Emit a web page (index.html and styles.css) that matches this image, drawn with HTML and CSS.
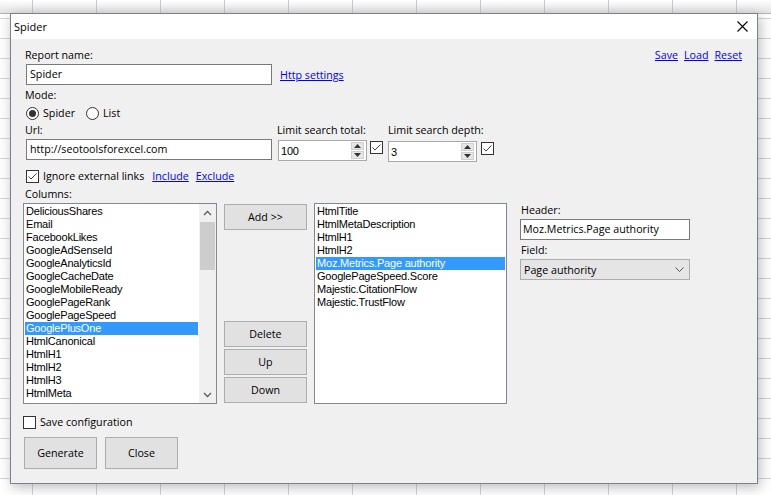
FILE: index.html
```html
<!DOCTYPE html>
<html>
<head>
<meta charset="utf-8">
<title>Spider</title>
<link rel="stylesheet" href="styles.css">
</head>
<body>
<div class="sheet">
  <div class="colhead"></div>
  <div class="cells"></div>
</div>

<div class="dialog">
  <div class="titlebar">
    <span class="title">Spider</span>
    <svg class="close" width="11" height="11" viewBox="0 0 11 11"><path d="M0.5 0.5 L10.5 10.5 M10.5 0.5 L0.5 10.5" stroke="#000" stroke-width="1.1" fill="none"/></svg>
  </div>
  <div class="body">
    <div class="row r-top">
      <span class="label">Report name:</span>
      <span class="toplinks"><a class="link">Save</a><a class="link">Load</a><a class="link">Reset</a></span>
    </div>
    <div class="row r-name">
      <div class="tb name">Spider</div>
      <a class="link http">Http settings</a>
    </div>
    <div class="label r-mode">Mode:</div>
    <div class="row r-radios">
      <span class="radio on"></span><span class="rlabel">Spider</span>
      <span class="radio r2"></span><span class="rlabel">List</span>
    </div>
    <div class="row r-url">
      <div class="field f-url">
        <div class="label">Url:</div>
        <div class="tb url">http://seotoolsforexcel.com</div>
      </div>
      <div class="field f-lim1">
        <div class="label">Limit search total:</div>
        <div class="spinrow s1">
          <div class="spin"><span class="spinval">100</span>
            <span class="spinbtns"><span class="sb"><svg width="7" height="4" viewBox="0 0 7 4"><path d="M0 4 L3.5 0 L7 4 Z" fill="#333"/></svg></span><span class="sb"><svg width="7" height="4" viewBox="0 0 7 4"><path d="M0 0 L3.5 4 L7 0 Z" fill="#333"/></svg></span></span>
          </div>
          <span class="cb"><svg width="11" height="11" viewBox="0 0 11 11"><path d="M1.5 5.5 L4 8 L9.5 2.5" stroke="#444" stroke-width="1" fill="none"/></svg></span>
        </div>
      </div>
      <div class="field f-lim2">
        <div class="label">Limit search depth:</div>
        <div class="spinrow s2">
          <div class="spin"><span class="spinval">3</span>
            <span class="spinbtns"><span class="sb"><svg width="7" height="4" viewBox="0 0 7 4"><path d="M0 4 L3.5 0 L7 4 Z" fill="#333"/></svg></span><span class="sb"><svg width="7" height="4" viewBox="0 0 7 4"><path d="M0 0 L3.5 4 L7 0 Z" fill="#333"/></svg></span></span>
          </div>
          <span class="cb"><svg width="11" height="11" viewBox="0 0 11 11"><path d="M1.5 5.5 L4 8 L9.5 2.5" stroke="#444" stroke-width="1" fill="none"/></svg></span>
        </div>
      </div>
    </div>
    <div class="row r-ignore">
      <span class="cb"><svg width="11" height="11" viewBox="0 0 11 11"><path d="M1.5 5.5 L4 8 L9.5 2.5" stroke="#444" stroke-width="1" fill="none"/></svg></span>
      <span class="cblabel">Ignore external links</span>
      <a class="link inc">Include</a>
      <a class="link exc">Exclude</a>
    </div>
    <div class="label r-cols">Columns:</div>
    <div class="row r-lists">
      <div class="list left">
        <div class="items">
          <div class="item">DeliciousShares</div>
          <div class="item">Email</div>
          <div class="item">FacebookLikes</div>
          <div class="item">GoogleAdSenseId</div>
          <div class="item">GoogleAnalyticsId</div>
          <div class="item">GoogleCacheDate</div>
          <div class="item">GoogleMobileReady</div>
          <div class="item">GooglePageRank</div>
          <div class="item">GooglePageSpeed</div>
          <div class="item sel">GooglePlusOne</div>
          <div class="item">HtmlCanonical</div>
          <div class="item">HtmlH1</div>
          <div class="item">HtmlH2</div>
          <div class="item">HtmlH3</div>
          <div class="item">HtmlMeta</div>
        </div>
        <div class="vscroll">
          <div class="arrow"><svg width="9" height="6" viewBox="0 0 9 6"><path d="M1 5 L4.5 1.5 L8 5" stroke="#606060" stroke-width="1.4" fill="none"/></svg></div>
          <div class="thumb"></div>
          <div class="track"></div>
          <div class="arrow"><svg width="9" height="6" viewBox="0 0 9 6"><path d="M1 1 L4.5 4.5 L8 1" stroke="#606060" stroke-width="1.4" fill="none"/></svg></div>
        </div>
      </div>
      <div class="btncol">
        <div class="btn add">Add &gt;&gt;</div>
        <div class="btn del">Delete</div>
        <div class="btn mv">Up</div>
        <div class="btn mv">Down</div>
      </div>
      <div class="list right">
        <div class="items">
          <div class="item">HtmlTitle</div>
          <div class="item">HtmlMetaDescription</div>
          <div class="item">HtmlH1</div>
          <div class="item">HtmlH2</div>
          <div class="item sel">Moz.Metrics.Page authority</div>
          <div class="item">GooglePageSpeed.Score</div>
          <div class="item">Majestic.CitationFlow</div>
          <div class="item">Majestic.TrustFlow</div>
        </div>
      </div>
      <div class="panel">
        <div class="label plabel">Header:</div>
        <div class="tb header">Moz.Metrics.Page authority</div>
        <div class="label plabel field-l">Field:</div>
        <div class="combo"><span>Page authority</span>
          <svg width="9" height="5" viewBox="0 0 9 5"><path d="M0.5 0.5 L4.5 4.5 L8.5 0.5" stroke="#555" stroke-width="1" fill="none"/></svg>
        </div>
      </div>
    </div>
    <div class="row r-save">
      <span class="cb"></span>
      <span class="cblabel">Save configuration</span>
    </div>
    <div class="row r-btns">
      <div class="btn big gen">Generate</div>
      <div class="btn big cls">Close</div>
    </div>
  </div>
</div>
</body>
</html>
```
FILE: styles.css
```css
* { box-sizing: border-box; }
html, body { margin: 0; padding: 0; }
body {
  width: 771px;
  height: 495px;
  overflow: hidden;
  position: relative;
  font-family: "Open Sans", "Noto Sans", sans-serif;
  font-size: 10.7px;
  color: #000;
  background: #fff;
}

/* spreadsheet backdrop */
.sheet { display: flex; flex-direction: column; height: 495px; }
.colhead {
  height: 14px;
  flex: none;
  border-bottom: 1px solid #b4b4b4;
  background:
    linear-gradient(to right, transparent 63px, #c8c8c8 63px) 33px 0 / 64px 100% repeat-x,
    linear-gradient(#ffffff, #e3e3e3);
}
.cells {
  flex: 1;
  background:
    linear-gradient(to right, transparent 63px, #d4d4d4 63px) 33px 0 / 64px 100%,
    linear-gradient(to bottom, transparent 19px, #d4d4d4 19px) 0 5px / 100% 20px,
    #fff;
}

/* dialog window */
.dialog {
  position: absolute;
  left: 10px;
  top: 13px;
  width: 748px;
  height: 471px;
  border: 1px solid #7c808a;
  background: #f0f0f0;
  box-shadow: 2px 3px 12px rgba(0, 0, 0, 0.28);
  display: flex;
  flex-direction: column;
}
.titlebar {
  height: 25px;
  flex: none;
  background: #fff;
  display: flex;
  align-items: center;
  justify-content: space-between;
  padding: 0 9px 1px 3px;
  font-size: 11px;
}
.close { display: block; margin-top: 1px; }

.body {
  flex: 1;
  display: flex;
  flex-direction: column;
  padding: 8px 15px 0 14px;
}
.row { display: flex; align-items: center; }
.label { line-height: 16px; height: 16px; white-space: nowrap; }
.link { color: #0000ff; text-decoration: underline; cursor: pointer; white-space: nowrap; }

.r-top { height: 16px; justify-content: space-between; line-height: 16px; }
.toplinks { display: flex; gap: 6px; }

.r-name { margin-top: 1px; height: 21px; }
.tb {
  height: 21px;
  border: 1px solid #7a7a7a;
  background: #fff;
  padding: 0 3px;
  line-height: 19px;
  white-space: nowrap;
  overflow: hidden;
}
.tb.name { width: 246px; margin-left: 1px; }
.http { margin-left: 8px; }

.r-mode { margin-top: 2px; }
.r-radios { margin-top: 2px; height: 16px; }
.radio {
  width: 13px; height: 13px;
  border: 1px solid #333;
  border-radius: 50%;
  background: #fff;
  margin-left: 1px;
  display: flex; align-items: center; justify-content: center;
}
.radio.on::after { content: ""; width: 7px; height: 7px; border-radius: 50%; background: #333; }
.radio.r2 { margin-left: 11px; }
.rlabel { margin-left: 4px; line-height: 16px; }

.r-url { margin-top: 1px; align-items: flex-start; height: 40px; }
.field { display: flex; flex-direction: column; }
.f-url { width: 252px; }
.tb.url { width: 246px; margin-left: 1px; margin-top: 1px; }
.f-lim1 { width: 111px; }
.spinrow { display: flex; align-items: flex-start; margin-left: 1px; }
.spinrow.s1 { margin-top: 2px; }
.spinrow.s2 { margin-top: 3px; margin-left: 0; }
.spin {
  width: 89px; height: 21px;
  border: 1px solid #a9a9a9;
  background: #fff;
  display: flex; align-items: center;
  padding-left: 2px;
}
.spinval, .item {
  font-family: "Liberation Sans", Arial, sans-serif;
  font-size: 11px;
  letter-spacing: -0.2px;
}
.spinbtns {
  margin-left: auto;
  margin-right: 2px;
  width: 13px;
  height: 17px;
  display: flex; flex-direction: column; gap: 1px;
}
.sb {
  flex: 1;
  background: #e6e6e6;
  border: 1px solid #cfcfcf;
  display: flex; align-items: center; justify-content: center;
}
.sb svg { display: block; }
.cb {
  width: 13px; height: 13px;
  border: 1px solid #333;
  background: #fff;
  display: flex; align-items: center; justify-content: center;
  flex: none;
}
.cb svg { display: block; }
.s1 .cb { margin-left: 3px; margin-top: 1px; }
.s2 .cb { margin-left: 4px; margin-top: 1px; }

.r-ignore { margin-top: 6px; height: 16px; }
.r-ignore .cb { margin-left: 1px; }
.cblabel { margin-left: 4px; line-height: 16px; white-space: nowrap; }
.inc { margin-left: 8px; }
.exc { margin-left: 7px; }

.r-cols { margin-top: 2px; }

.r-lists { margin-top: 1px; align-items: flex-start; height: 201px; }
.list {
  height: 201px;
  border: 1px solid #828790;
  background: #fff;
  display: flex;
  overflow: hidden;
}
.list.left { width: 194px; margin-left: -2px; }
.list.right { width: 193px; margin-left: 7px; }
.items { flex: 1; padding: 1px; overflow: hidden; }
.item { height: 13px; line-height: 13px; padding-left: 1px; white-space: nowrap; }
.item.sel { background: #3399ff; color: #fff; }

.vscroll { width: 17px; background: #f0f0f0; display: flex; flex-direction: column; flex: none; }
.arrow { height: 17px; display: flex; align-items: center; justify-content: center; flex: none; }
.arrow svg { display: block; }
.thumb { height: 48px; margin: 1px 1px 0; background: #cdcdcd; flex: none; }
.track { flex: 1; }

.btncol { display: flex; flex-direction: column; margin-left: 7px; width: 83px; }
.btn {
  background: #e1e1e1;
  border: 1px solid #adadad;
  display: flex; align-items: center; justify-content: center;
  white-space: nowrap;
}
.btncol .btn { height: 26px; }
.btn.add { margin-top: 1px; }
.btn.del { margin-top: 91px; }
.btn.mv { margin-top: 2px; }

.panel { width: 170px; margin-left: 13px; margin-top: -1px; display: flex; flex-direction: column; }
.plabel { padding-left: 1px; }
.tb.header { margin-top: 1px; padding-left: 2px; }
.field-l { margin-top: 2px; }
.combo {
  margin-top: 1px;
  height: 21px;
  background: #e5e5e5;
  border: 1px solid #adadad;
  display: flex; align-items: center; justify-content: space-between;
  padding: 0 5px 0 3px;
}
.combo svg { display: block; }

.r-save { margin-top: 10px; height: 16px; }
.r-save .cb { margin-left: -2px; }

.r-btns { margin-top: 7px; }
.btn.big { width: 73px; height: 32px; }
.btn.gen { margin-left: -1px; }
.btn.cls { margin-left: 8px; }
```
